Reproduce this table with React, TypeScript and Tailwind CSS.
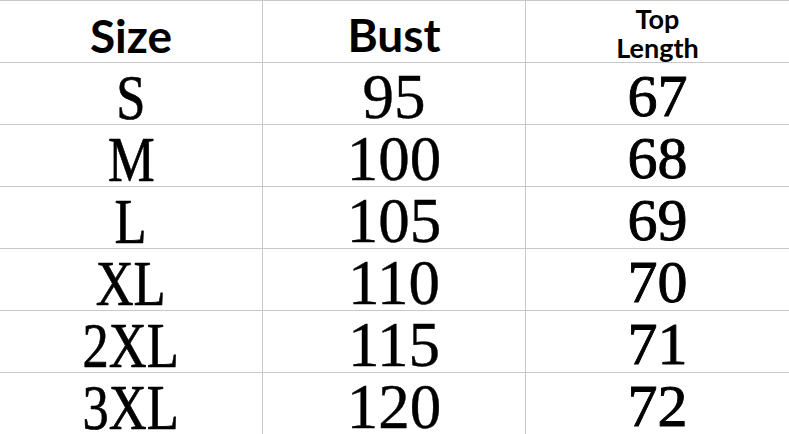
import React from "react";

const rows = [
  ["S", "95", "67"],
  ["M", "100", "68"],
  ["L", "105", "69"],
  ["XL", "110", "70"],
  ["2XL", "115", "71"],
  ["3XL", "120", "72"],
];

const serif = "font-['Liberation_Serif','Times_New_Roman',serif]";

export default function App() {
  return (
    <div className="w-[789px] h-[434px] overflow-hidden bg-white text-black">
      <div className="grid grid-cols-[262px_263px_264px] grid-rows-[repeat(7,62px)]">
        {/* header */}
        <div className="border-t border-[#c8c8c8] flex justify-center pt-[12px]">
          <span className="font-['Lato',sans-serif] font-bold text-[46px] leading-none">Size</span>
        </div>
        <div className="border-t border-l border-[#c8c8c8] flex justify-center pt-[11px]">
          <span className="font-['Lato',sans-serif] font-bold text-[46px] leading-none">Bust</span>
        </div>
        <div className="border-t border-l border-[#c8c8c8] flex flex-col items-center pt-[3px]">
          <span className="font-['Lato',sans-serif] font-bold text-[27px] leading-[29px] text-center">
            Top
            <br />
            Length
          </span>
        </div>

        {rows.map(([size, bust, len]) => (
          <React.Fragment key={size}>
            <div className="border-t border-[#c8c8c8] flex justify-center pt-[3px]">
              <span className={`${serif} text-[64px] leading-none scale-x-[0.82] [-webkit-text-stroke:0.7px_black]`}>
                {size}
              </span>
            </div>
            <div className="border-t border-l border-[#c8c8c8] flex justify-center pt-[3px]">
              <span className={`${serif} text-[63px] leading-none [-webkit-text-stroke:0.4px_black]`}>{bust}</span>
            </div>
            <div className="border-t border-l border-[#c8c8c8] flex justify-center pt-[3px]">
              <span className={`${serif} text-[60px] leading-none [-webkit-text-stroke:0.9px_black]`}>{len}</span>
            </div>
          </React.Fragment>
        ))}
      </div>
    </div>
  );
}
